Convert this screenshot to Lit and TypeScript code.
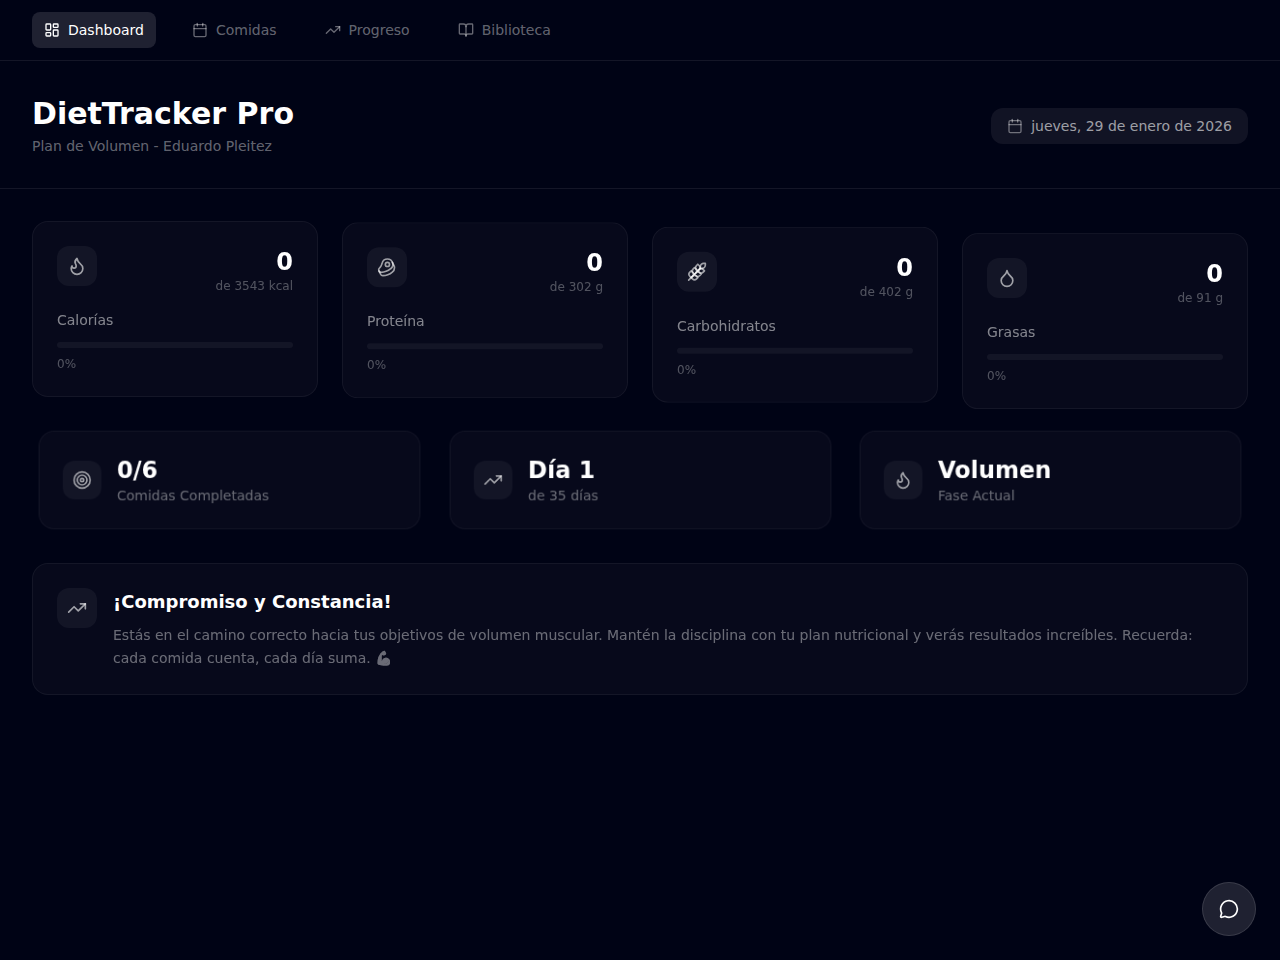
import { LitElement, html, css, svg } from "lit";
import { customElement } from "lit/decorators.js";
import { styleMap } from "lit/directives/style-map.js";

const icons = {
  dashboard: svg`<rect width="7" height="9" x="3" y="3" rx="1"/><rect width="7" height="5" x="14" y="3" rx="1"/><rect width="7" height="9" x="14" y="12" rx="1"/><rect width="7" height="5" x="3" y="16" rx="1"/>`,
  calendar: svg`<path d="M8 2v4"/><path d="M16 2v4"/><rect width="18" height="18" x="3" y="4" rx="2"/><path d="M3 10h18"/>`,
  trending: svg`<path d="M16 7h6v6"/><path d="m22 7-8.5 8.5-5-5L2 17"/>`,
  book: svg`<path d="M12 7v14"/><path d="M3 18a1 1 0 0 1-1-1V4a1 1 0 0 1 1-1h5a4 4 0 0 1 4 4 4 4 0 0 1 4-4h5a1 1 0 0 1 1 1v13a1 1 0 0 1-1 1h-6a3 3 0 0 0-3 3 3 3 0 0 0-3-3z"/>`,
  flame: svg`<path d="M8.5 14.5A2.5 2.5 0 0 0 11 12c0-1.38-.5-2-1-3-1.072-2.143-.224-4.054 2-6 .5 2.5 2 4.9 4 6.5 2 1.6 3 3.5 3 5.5a7 7 0 1 1-14 0c0-1.153.433-2.294 1-3a2.5 2.5 0 0 0 2.5 2.5z"/>`,
  beef: svg`<circle cx="12.5" cy="8.5" r="2.5"/><path d="M12.5 2a6.5 6.5 0 0 0-6.22 4.6c-1.1 3.13-.78 3.9-3.18 6.08A3 3 0 0 0 5 18c4 0 8.4-1.8 11.4-4.3A6.5 6.5 0 0 0 12.5 2Z"/><path d="m18.5 6 2.19 4.5a6.48 6.48 0 0 1 .31 2 6.49 6.49 0 0 1-2.6 5.2C15.4 20.2 11 22 7 22a3 3 0 0 1-2.68-1.66L2.4 16.5"/>`,
  wheat: svg`<path d="M2 22 16 8"/><path d="M3.47 12.53 5 11l1.53 1.53a3.5 3.5 0 0 1 0 4.94L5 19l-1.53-1.53a3.5 3.5 0 0 1 0-4.94Z"/><path d="M7.47 8.53 9 7l1.53 1.53a3.5 3.5 0 0 1 0 4.94L9 15l-1.53-1.53a3.5 3.5 0 0 1 0-4.94Z"/><path d="M11.47 4.53 13 3l1.53 1.53a3.5 3.5 0 0 1 0 4.94L13 11l-1.53-1.53a3.5 3.5 0 0 1 0-4.94Z"/><path d="M20 2h2v2a4 4 0 0 1-4 4h-2V6a4 4 0 0 1 4-4Z"/><path d="M11.47 17.47 13 19l-1.53 1.53a3.5 3.5 0 0 1-4.94 0L5 19l1.53-1.53a3.5 3.5 0 0 1 4.94 0Z"/><path d="M15.47 13.47 17 15l-1.53 1.53a3.5 3.5 0 0 1-4.94 0L9 15l1.53-1.53a3.5 3.5 0 0 1 4.94 0Z"/><path d="M19.47 9.47 21 11l-1.53 1.53a3.5 3.5 0 0 1-4.94 0L13 11l1.53-1.53a3.5 3.5 0 0 1 4.94 0Z"/>`,
  droplet: svg`<path d="M12 22a7 7 0 0 0 7-7c0-2-1-3.9-3-5.5s-3.5-4-4-6.5c-.5 2.5-2 4.9-4 6.5C6 11.1 5 13 5 15a7 7 0 0 0 7 7z"/>`,
  target: svg`<circle cx="12" cy="12" r="10"/><circle cx="12" cy="12" r="6"/><circle cx="12" cy="12" r="2"/>`,
  message: svg`<path d="M2.992 16.342a2 2 0 0 1 .094 1.167l-1.065 3.29a1 1 0 0 0 1.236 1.168l3.413-.998a2 2 0 0 1 1.099.092 10 10 0 1 0-4.777-4.719"/>`,
};

type IconName = keyof typeof icons;

const icon = (name: IconName, size: number) => html`<svg
  width=${size}
  height=${size}
  viewBox="0 0 24 24"
  fill="none"
  stroke="currentColor"
  stroke-width="2"
  stroke-linecap="round"
  stroke-linejoin="round"
>${icons[name]}</svg>`;

const tabs: { name: IconName; label: string }[] = [
  { name: "dashboard", label: "Dashboard" },
  { name: "calendar", label: "Comidas" },
  { name: "trending", label: "Progreso" },
  { name: "book", label: "Biblioteca" },
];

// "shift" is how far each card still sits below its resting place.
const macros: { name: IconName; label: string; goal: string; shift: number }[] = [
  { name: "flame", label: "Calorías", goal: "3543 kcal", shift: 0 },
  { name: "beef", label: "Proteína", goal: "302 g", shift: 1.3 },
  { name: "wheat", label: "Carbohidratos", goal: "402 g", shift: 5.75 },
  { name: "droplet", label: "Grasas", goal: "91 g", shift: 12.1 },
];

const stats: { name: IconName; value: string; label: string }[] = [
  { name: "target", value: "0/6", label: "Comidas Completadas" },
  { name: "trending", value: "Día 1", label: "de 35 días" },
  { name: "flame", value: "Volumen", label: "Fase Actual" },
];

@customElement("app-root")
export class AppRoot extends LitElement {
  static styles = css`
    :host {
      display: block;
      box-sizing: border-box;
      min-height: 100vh;
      background: #000315;
      color: #fff;
      font-family: "DejaVu Sans", sans-serif;
      font-size: 14px;
      line-height: 20px;
    }
    *, *::before, *::after { box-sizing: border-box; }
    svg { display: block; flex: none; }
    h1, h2, p { margin: 0; }
    nav {
      display: flex;
      gap: 24px;
      padding: 12px 32px;
      border-bottom: 1px solid rgba(255, 255, 255, 0.08);
    }
    .tab {
      display: flex;
      align-items: center;
      gap: 8px;
      padding: 8px 12px;
      border-radius: 8px;
      color: rgba(255, 255, 255, 0.4);
    }
    .tab.active { background: rgba(255, 255, 255, 0.12); color: #fff; }
    header {
      display: flex;
      justify-content: space-between;
      align-items: center;
      padding: 32px;
      border-bottom: 1px solid rgba(255, 255, 255, 0.08);
    }
    h1 { font-size: 30px; line-height: 41px; font-weight: 700; }
    .subtitle { margin-top: 2px; color: rgba(255, 255, 255, 0.4); }
    .date {
      display: flex;
      align-items: center;
      gap: 8px;
      margin-top: 3px;
      padding: 8px 16px;
      border-radius: 12px;
      background: rgba(255, 255, 255, 0.065);
      color: rgba(255, 255, 255, 0.6);
    }
    .date svg { color: rgba(255, 255, 255, 0.4); }
    main { display: flex; flex-direction: column; gap: 32px; padding: 32px; }
    .macros { display: grid; grid-template-columns: repeat(4, 1fr); gap: 24px; }
    .macros .card { will-change: transform; }
    .stats { display: grid; grid-template-columns: repeat(3, 1fr); gap: 16px; }
    .card {
      padding: 24px;
      border: 1px solid rgba(255, 255, 255, 0.055);
      border-radius: 16px;
      background: rgba(255, 255, 255, 0.026);
    }
    .top { display: flex; justify-content: space-between; align-items: flex-start; margin-bottom: 16px; }
    .tile {
      display: flex;
      flex: none;
      align-items: center;
      justify-content: center;
      width: 40px;
      height: 40px;
      border-radius: 12px;
      background: rgba(255, 255, 255, 0.05);
      color: rgba(255, 255, 255, 0.6);
    }
    .figure { text-align: right; }
    .value { font-size: 24px; line-height: 32px; font-weight: 700; }
    .small { font-size: 12px; line-height: 16px; color: rgba(255, 255, 255, 0.3); }
    .label { color: rgba(255, 255, 255, 0.5); margin-bottom: 12px; }
    .track { height: 6px; margin-bottom: 8px; border-radius: 3px; background: rgba(255, 255, 255, 0.05); }
    .stat {
      display: flex;
      align-items: center;
      gap: 16px;
      transform: scale(0.9665);
      will-change: transform;
    }
    .muted { color: rgba(255, 255, 255, 0.4); }
    .note { display: flex; align-items: flex-start; gap: 16px; }
    h2 { font-size: 18px; line-height: 28px; font-weight: 700; margin-bottom: 8px; }
    .note p {
      line-height: 22.75px;
      color: rgba(255, 255, 255, 0.4);
      filter: grayscale(1) brightness(1.6);
    }
    .chat {
      position: fixed;
      right: 24px;
      bottom: 24px;
      display: flex;
      align-items: center;
      justify-content: center;
      width: 54px;
      height: 54px;
      padding: 0;
      border: 1px solid rgba(255, 255, 255, 0.12);
      border-radius: 50%;
      background: rgba(255, 255, 255, 0.12);
      color: #fff;
    }
  `;

  render() {
    return html`
      <nav>
        ${tabs.map(
          (t, i) => html`<div class="tab ${i === 0 ? "active" : ""}">${icon(t.name, 16)}<span>${t.label}</span></div>`
        )}
      </nav>
      <header>
        <div>
          <h1>DietTracker Pro</h1>
          <p class="subtitle">Plan de Volumen - Eduardo Pleitez</p>
        </div>
        <div class="date">${icon("calendar", 16)}<span>jueves, 29 de enero de 2026</span></div>
      </header>
      <main>
        <section class="macros">
          ${macros.map(
            (m) => html`<div class="card" style=${styleMap({ transform: m.shift ? `translateY(${m.shift}px)` : "none" })}>
              <div class="top">
                <div class="tile">${icon(m.name, 20)}</div>
                <div class="figure">
                  <div class="value">0</div>
                  <div class="small">de ${m.goal}</div>
                </div>
              </div>
              <div class="label">${m.label}</div>
              <div class="track"></div>
              <div class="small">0%</div>
            </div>`
          )}
        </section>
        <section class="stats">
          ${stats.map(
            (s) => html`<div class="card stat">
              <div class="tile">${icon(s.name, 20)}</div>
              <div>
                <div class="value">${s.value}</div>
                <div class="muted">${s.label}</div>
              </div>
            </div>`
          )}
        </section>
        <section class="card note">
          <div class="tile">${icon("trending", 20)}</div>
          <div>
            <h2>¡Compromiso y Constancia!</h2>
            <p>Estás en el camino correcto hacia tus objetivos de volumen muscular. Mantén la disciplina con tu plan nutricional y verás resultados increíbles. Recuerda: cada comida cuenta, cada día suma. 💪</p>
          </div>
        </section>
      </main>
      <button class="chat" aria-label="Chat">${icon("message", 20)}</button>
    `;
  }
}
